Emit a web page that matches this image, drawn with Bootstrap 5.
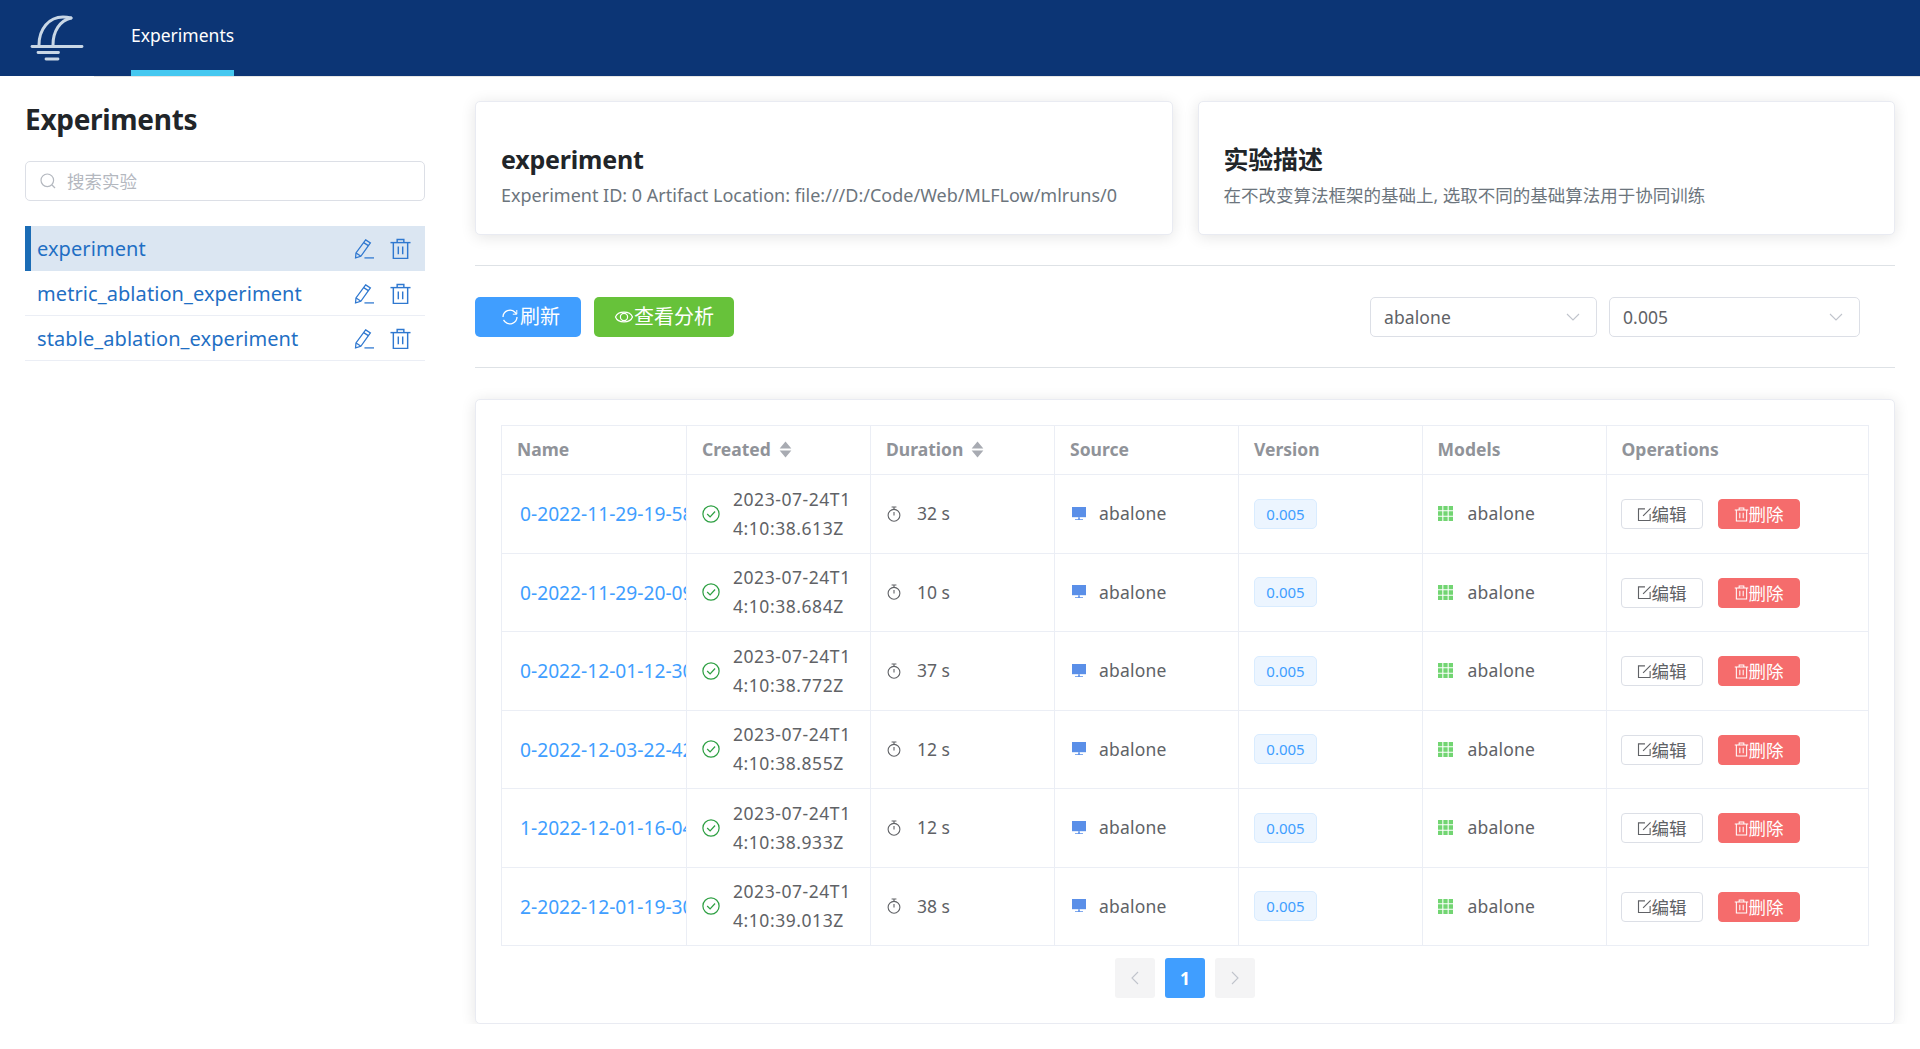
<!DOCTYPE html>
<html lang="zh">
<head>
<meta charset="utf-8">
<title>Experiments</title>
<link href="https://cdn.jsdelivr.net/npm/bootstrap@5.3.0/dist/css/bootstrap.min.css" rel="stylesheet">
<style>
body{font-family:"Noto Sans","Noto Sans CJK SC",sans-serif;font-size:17.5px;color:#212529;background:#fff;overflow:hidden}
svg{display:block;flex:none}
.top-bar{height:76px;background:#0c3575;padding:0}
.logo-box{width:94px;height:76px;padding:14px 0 0 30px}
.top-menu{height:77px;flex:1;border-bottom:1px solid #e6e6e6;padding-left:37px}
.top-link{display:block;height:76px;line-height:70px;padding:0;color:#fff;font-size:17.5px;border-bottom:6px solid #45c8f0}
.top-link:hover{color:#fff}
.side{width:475px;flex:none;padding:0 50px 0 25px}
.side-title{font-size:28px;font-weight:700;line-height:40px;margin:23px 0 22px;letter-spacing:-.3px}
.search-wrap{height:40px;border:1px solid #dcdfe6;border-radius:5px;padding:0 14px;gap:11px;color:#b4b8bf;margin-bottom:25px;font-size:17.5px}
.exp-list{border-radius:0}
.exp-item{height:45px;padding:1px 14px 0 12px;border:0;border-bottom:1px solid #ebeef5;background:transparent;color:#1f6fc4;font-size:20px;letter-spacing:.08px}
.exp-item.on{background:#dbe6f2;border-left:6px solid #1b6cb5;padding:0 14px 0 6px;color:#1f6fc4;border-bottom:0}
.exp-name{flex:1}
.exp-tools{gap:16px;color:#2f78d0}
.main-col{flex:1;min-width:0;padding:25px 25px 0 0}
.info-row{gap:25px}
.info-card{flex:1;height:134px;border:1px solid #e9ebf2;border-radius:5px;box-shadow:0 2px 15px rgba(0,0,0,.11);padding:42px 25px 0}
.info-title{font-size:25px;font-weight:700;line-height:30px;margin:0 0 7px;letter-spacing:-.2px}
.info-text{font-size:17.5px;line-height:28px;color:#6c757d;white-space:nowrap}
.info-latin{font-size:18px}
.rule{margin:30px 0 31px;border:0;border-top:1px solid #dee2e6;opacity:1}
.rule-last{margin:30px 0 31px}
.tool-btn{height:40px;border:0;border-radius:5px;color:#fff;font-size:20px;line-height:40px;padding:0;display:flex;align-items:center;justify-content:center}
.tool-btn:hover{color:#fff}
.btn-blue{width:106px;background:#409eff;padding-left:4px}
.btn-blue:hover{background:#409eff}
.btn-green{width:140px;background:#67c23a;margin-left:13px}
.btn-green:hover{background:#67c23a}
.pick{height:40px;border:1px solid #dcdfe6;border-radius:5px;padding:0 16px 0 13px;color:#606266;font-size:17.5px;justify-content:space-between;letter-spacing:.1px}
.pick-a{width:227px}
.pick-b{width:251px;margin-left:12px;margin-right:35px}
.table-card{height:625px;border:1px solid #e9ebf2;border-radius:5px;box-shadow:0 2px 15px rgba(0,0,0,.11);padding:25px 25px 0}
.run-table{table-layout:fixed;width:1367px;margin:0;border-color:#ebeef5;font-size:17.5px;color:#606266}
.run-table th,.run-table td{padding:0 15px;vertical-align:middle;border-color:#ebeef5;color:#606266;line-height:29px;box-shadow:none}
.run-table thead th{height:49px;color:#909399;font-weight:700;white-space:nowrap;line-height:27px;padding-bottom:2px}
.run-table tbody td{height:78.5px}
.run-table .ops-cell{padding-left:14px}
.col-a{width:185px}.col-b{width:184px}.col-c{width:183.5px}.col-d{width:262.5px}
.run-table .name-cell{overflow:hidden;white-space:nowrap;padding-top:1px}
.name-cell a{color:#409eff;text-decoration:none;margin-left:3px;font-size:19.2px}
.cell-flex{display:flex;align-items:center}
.sort-head{gap:8px}
.gap-icon{gap:15px}
.gap-date{gap:13px}
.gap-src{gap:13px;margin-left:2px}
.date-text{letter-spacing:.55px}
.item-text{letter-spacing:.2px}
.ver-tag{display:inline-block;width:63px;height:30px;line-height:28px;border:1px solid #d9ecff;background:#ecf5ff;color:#409eff;border-radius:5px;text-align:center;font-size:15px}
.op-btn{width:82px;height:30px;border-radius:4px;font-size:17.5px;padding:0;display:inline-flex;align-items:center;justify-content:center;line-height:28px}
.op-edit{border:1px solid #dcdfe6;background:#fff;color:#606266}
.op-edit:hover{background:#fff;color:#606266;border-color:#dcdfe6}
.op-del{border:1px solid #f56c6c;background:#f56c6c;color:#fff;margin-left:15px}
.op-del:hover{background:#f56c6c;color:#fff;border-color:#f56c6c}
.pager-row{gap:10px;margin:12px 0 0;padding:0}
.pager-btn{width:40px;height:40px;border:0;border-radius:3px;background:#f4f4f5;color:#c0c4cc;display:flex;align-items:center;justify-content:center;font-size:17.5px;font-weight:700;padding:0}
.pager-btn.on{background:#409eff;color:#fff}
</style>
</head>
<body>
<svg width="0" height="0" style="position:absolute">
<defs>
<symbol id="i-pen" viewBox="0 0 22 22"><g fill="none" stroke="currentColor" stroke-width="1.4"><path d="M12.800 1 18 4.300 7.500 19 1.700 20.800 2.200 15.300Z"/><path d="M10.600 4 15.800 7.300"/><path d="M2.300 15.500 7.300 18.800"/><path d="M11.500 20.800H22"/></g></symbol>
<symbol id="i-bin" viewBox="0 0 22 22"><g fill="none" stroke="currentColor" stroke-width="1.5"><path d="M.5 4.300H21.500"/><path d="M7.500 4V1H14.500V4"/><path d="M3.500 4.300V20.800H18.500V4.300"/><path d="M8.700 8.500V16.500M13.300 8.500V16.500"/></g></symbol>
<symbol id="i-check" viewBox="0 0 16 16"><circle cx="8" cy="8" r="7.200" fill="none" stroke="#2ea043" stroke-width="1.100"/><path d="M4.600 8 7.200 10.600 11.600 5.800" fill="none" stroke="#2ea043" stroke-width="1.100"/></symbol>
<symbol id="i-timer" viewBox="0 0 16 16"><g fill="none" stroke="#606266" stroke-width="1.100"><circle cx="8" cy="9.300" r="5.900"/><path d="M5.600 1H10.400M8 1V3.400M8 6V9.500"/></g></symbol>
<symbol id="i-screen" viewBox="0 0 14 14"><path fill="#5a8fe8" d="M0 0H14V10.200H0Z"/><path fill="#5a8fe8" d="M6.200 10.200H7.800V12.200H11V13H3V12.200H6.200Z"/></symbol>
<symbol id="i-grid" viewBox="0 0 14 14"><path fill="#72d572" d="M0 0H4V4H0ZM5 0H9V4H5ZM10 0H14V4H10ZM0 5H4V9H0ZM5 5H9V9H5ZM10 5H14V9H10ZM0 10H4V14H0ZM5 10H9V14H5ZM10 10H14V14H10Z"/></symbol>
<symbol id="i-edit" viewBox="0 0 16 16"><g fill="none" stroke="currentColor" stroke-width="1.200"><path d="M8.500 2H1.600V14.400H14V7.500"/><path d="M6.500 9.500 14.500 1.500"/></g></symbol>
<symbol id="i-del" viewBox="0 0 16 16"><g fill="none" stroke="currentColor" stroke-width="1.100"><path d="M.8 3.200H15.200M5.500 3V1H10.500V3M2.500 3.200V15H13.500V3.200M6.200 6V12M9.800 6V12"/></g></symbol>
<symbol id="i-sort" viewBox="0 0 12 16"><path fill="#a8abb2" d="M6 .5 11.500 7H.5ZM.5 9H11.500L6 15.500Z"/></symbol>
</defs>
</svg>

<header class="navbar top-bar d-flex flex-nowrap align-items-start">
  <div class="logo-box">
    <svg width="54" height="48" viewBox="0 0 54 48" aria-label="logo">
      <g fill="none" stroke="#c9d7e6" stroke-linecap="round">
        <path stroke-width="2.800" d="M2 32.500H52"/>
        <path stroke-width="2.800" d="M8 38.500H28.500M16 45H28"/>
        <path stroke-width="3" d="M9 31C9 15 19 3 33 3 36 3 38 3.300 41 4"/>
        <path stroke-width="3" d="M41 4C30 6.500 23 17 23 31"/>
      </g>
    </svg>
  </div>
  <nav class="top-menu nav">
    <a class="top-link nav-link" href="#">Experiments</a>
  </nav>
</header>

<div class="d-flex">
  <aside class="side">
    <h4 class="side-title">Experiments</h4>
    <div class="search-wrap d-flex align-items-center">
      <svg width="16" height="16" viewBox="0 0 16 16"><g fill="none" stroke="#b4b8bf" stroke-width="1.200"><circle cx="7.300" cy="7.300" r="6.300"/><path d="M12 12 15 15"/></g></svg>
      <span>搜索实验</span>
    </div>
    <div class="list-group exp-list">
      <div class="list-group-item exp-item on d-flex align-items-center"><span class="exp-name">experiment</span><span class="exp-tools d-flex"><svg width="20" height="22"><use href="#i-pen"/></svg><svg width="21" height="22"><use href="#i-bin"/></svg></span></div>
      <div class="list-group-item exp-item d-flex align-items-center"><span class="exp-name">metric_ablation_experiment</span><span class="exp-tools d-flex"><svg width="20" height="22"><use href="#i-pen"/></svg><svg width="21" height="22"><use href="#i-bin"/></svg></span></div>
      <div class="list-group-item exp-item d-flex align-items-center"><span class="exp-name">stable_ablation_experiment</span><span class="exp-tools d-flex"><svg width="20" height="22"><use href="#i-pen"/></svg><svg width="21" height="22"><use href="#i-bin"/></svg></span></div>
    </div>
  </aside>

  <main class="main-col">
    <div class="info-row d-flex">
      <div class="card info-card">
        <h5 class="info-title">experiment</h5>
        <div class="info-text info-latin">Experiment ID: 0 Artifact Location: file:///D:/Code/Web/MLFLow/mlruns/0</div>
      </div>
      <div class="card info-card">
        <h5 class="info-title">实验描述</h5>
        <div class="info-text">在不改变算法框架的基础上, 选取不同的基础算法用于协同训练</div>
      </div>
    </div>
    <hr class="rule">
    <div class="d-flex align-items-center">
      <button class="btn tool-btn btn-blue" type="button"><svg width="20" height="20" viewBox="0 0 20 20"><g fill="none" stroke="#fff" stroke-width="1.300"><path d="M3 10A7 7 0 0 1 15 5.300L16.500 7"/><path d="M17 10A7 7 0 0 1 5 14.700L3.500 13"/><path d="M16.800 3V7.200H12.800" stroke-width="1"/></g></svg>刷新</button>
      <button class="btn tool-btn btn-green" type="button"><svg width="20" height="20" viewBox="0 0 20 20"><g fill="none" stroke="#fff" stroke-width="1.200"><path d="M1.500 10C4 3.500 16 3.500 18.500 10 16 16.500 4 16.500 1.500 10Z"/><circle cx="10" cy="10" r="3.600"/></g></svg>查看分析</button>
      <div class="ms-auto d-flex">
        <div class="pick pick-a d-flex align-items-center"><span>abalone</span><svg width="14" height="8" viewBox="0 0 14 8"><path d="M1 1 7 7 13 1" fill="none" stroke="#c0c4cc" stroke-width="1.100"/></svg></div>
        <div class="pick pick-b d-flex align-items-center"><span>0.005</span><svg width="14" height="8" viewBox="0 0 14 8"><path d="M1 1 7 7 13 1" fill="none" stroke="#c0c4cc" stroke-width="1.100"/></svg></div>
      </div>
    </div>
    <hr class="rule rule-last">
    <div class="card table-card">
      <table class="table table-bordered run-table">
        <colgroup><col class="col-a"><col class="col-b"><col class="col-b"><col class="col-b"><col class="col-c"><col class="col-b"><col class="col-d"></colgroup>
        <thead>
          <tr>
            <th>Name</th>
            <th><span class="cell-flex sort-head">Created <svg width="13" height="17"><use href="#i-sort"/></svg></span></th>
            <th><span class="cell-flex sort-head">Duration <svg width="13" height="17"><use href="#i-sort"/></svg></span></th>
            <th>Source</th><th>Version</th><th>Models</th><th>Operations</th>
          </tr>
        </thead>
        <tbody>
          <tr><td class="name-cell"><a href="#">0-2022-11-29-19-58</a></td><td><div class="cell-flex gap-date"><svg width="18" height="18"><use href="#i-check"/></svg><span class="date-text">2023-07-24T1<br>4:10:38.613Z</span></div></td><td><div class="cell-flex gap-icon"><svg width="16" height="16"><use href="#i-timer"/></svg><span>32 s</span></div></td><td><div class="cell-flex gap-src"><svg width="14" height="14"><use href="#i-screen"/></svg><span class="item-text">abalone</span></div></td><td><span class="ver-tag">0.005</span></td><td><div class="cell-flex gap-icon"><svg width="15" height="15"><use href="#i-grid"/></svg><span class="item-text">abalone</span></div></td><td class="ops-cell"><button class="btn op-btn op-edit" type="button"><svg width="15" height="15"><use href="#i-edit"/></svg>编辑</button><button class="btn op-btn op-del" type="button"><svg width="15" height="15"><use href="#i-del"/></svg>删除</button></td></tr>
          <tr><td class="name-cell"><a href="#">0-2022-11-29-20-09</a></td><td><div class="cell-flex gap-date"><svg width="18" height="18"><use href="#i-check"/></svg><span class="date-text">2023-07-24T1<br>4:10:38.684Z</span></div></td><td><div class="cell-flex gap-icon"><svg width="16" height="16"><use href="#i-timer"/></svg><span>10 s</span></div></td><td><div class="cell-flex gap-src"><svg width="14" height="14"><use href="#i-screen"/></svg><span class="item-text">abalone</span></div></td><td><span class="ver-tag">0.005</span></td><td><div class="cell-flex gap-icon"><svg width="15" height="15"><use href="#i-grid"/></svg><span class="item-text">abalone</span></div></td><td class="ops-cell"><button class="btn op-btn op-edit" type="button"><svg width="15" height="15"><use href="#i-edit"/></svg>编辑</button><button class="btn op-btn op-del" type="button"><svg width="15" height="15"><use href="#i-del"/></svg>删除</button></td></tr>
          <tr><td class="name-cell"><a href="#">0-2022-12-01-12-30</a></td><td><div class="cell-flex gap-date"><svg width="18" height="18"><use href="#i-check"/></svg><span class="date-text">2023-07-24T1<br>4:10:38.772Z</span></div></td><td><div class="cell-flex gap-icon"><svg width="16" height="16"><use href="#i-timer"/></svg><span>37 s</span></div></td><td><div class="cell-flex gap-src"><svg width="14" height="14"><use href="#i-screen"/></svg><span class="item-text">abalone</span></div></td><td><span class="ver-tag">0.005</span></td><td><div class="cell-flex gap-icon"><svg width="15" height="15"><use href="#i-grid"/></svg><span class="item-text">abalone</span></div></td><td class="ops-cell"><button class="btn op-btn op-edit" type="button"><svg width="15" height="15"><use href="#i-edit"/></svg>编辑</button><button class="btn op-btn op-del" type="button"><svg width="15" height="15"><use href="#i-del"/></svg>删除</button></td></tr>
          <tr><td class="name-cell"><a href="#">0-2022-12-03-22-42</a></td><td><div class="cell-flex gap-date"><svg width="18" height="18"><use href="#i-check"/></svg><span class="date-text">2023-07-24T1<br>4:10:38.855Z</span></div></td><td><div class="cell-flex gap-icon"><svg width="16" height="16"><use href="#i-timer"/></svg><span>12 s</span></div></td><td><div class="cell-flex gap-src"><svg width="14" height="14"><use href="#i-screen"/></svg><span class="item-text">abalone</span></div></td><td><span class="ver-tag">0.005</span></td><td><div class="cell-flex gap-icon"><svg width="15" height="15"><use href="#i-grid"/></svg><span class="item-text">abalone</span></div></td><td class="ops-cell"><button class="btn op-btn op-edit" type="button"><svg width="15" height="15"><use href="#i-edit"/></svg>编辑</button><button class="btn op-btn op-del" type="button"><svg width="15" height="15"><use href="#i-del"/></svg>删除</button></td></tr>
          <tr><td class="name-cell"><a href="#">1-2022-12-01-16-04</a></td><td><div class="cell-flex gap-date"><svg width="18" height="18"><use href="#i-check"/></svg><span class="date-text">2023-07-24T1<br>4:10:38.933Z</span></div></td><td><div class="cell-flex gap-icon"><svg width="16" height="16"><use href="#i-timer"/></svg><span>12 s</span></div></td><td><div class="cell-flex gap-src"><svg width="14" height="14"><use href="#i-screen"/></svg><span class="item-text">abalone</span></div></td><td><span class="ver-tag">0.005</span></td><td><div class="cell-flex gap-icon"><svg width="15" height="15"><use href="#i-grid"/></svg><span class="item-text">abalone</span></div></td><td class="ops-cell"><button class="btn op-btn op-edit" type="button"><svg width="15" height="15"><use href="#i-edit"/></svg>编辑</button><button class="btn op-btn op-del" type="button"><svg width="15" height="15"><use href="#i-del"/></svg>删除</button></td></tr>
          <tr><td class="name-cell"><a href="#">2-2022-12-01-19-30</a></td><td><div class="cell-flex gap-date"><svg width="18" height="18"><use href="#i-check"/></svg><span class="date-text">2023-07-24T1<br>4:10:39.013Z</span></div></td><td><div class="cell-flex gap-icon"><svg width="16" height="16"><use href="#i-timer"/></svg><span>38 s</span></div></td><td><div class="cell-flex gap-src"><svg width="14" height="14"><use href="#i-screen"/></svg><span class="item-text">abalone</span></div></td><td><span class="ver-tag">0.005</span></td><td><div class="cell-flex gap-icon"><svg width="15" height="15"><use href="#i-grid"/></svg><span class="item-text">abalone</span></div></td><td class="ops-cell"><button class="btn op-btn op-edit" type="button"><svg width="15" height="15"><use href="#i-edit"/></svg>编辑</button><button class="btn op-btn op-del" type="button"><svg width="15" height="15"><use href="#i-del"/></svg>删除</button></td></tr>
        </tbody>
      </table>
      <div class="pager-row d-flex justify-content-center">
        <button class="pager-btn" type="button"><svg width="8" height="14" viewBox="0 0 8 14"><path d="M7 1 1 7 7 13" fill="none" stroke="#c0c4cc" stroke-width="1.100"/></svg></button>
        <button class="pager-btn on" type="button">1</button>
        <button class="pager-btn" type="button"><svg width="8" height="14" viewBox="0 0 8 14"><path d="M1 1 7 7 1 13" fill="none" stroke="#c0c4cc" stroke-width="1.100"/></svg></button>
      </div>
    </div>
  </main>
</div>
</body>
</html>
